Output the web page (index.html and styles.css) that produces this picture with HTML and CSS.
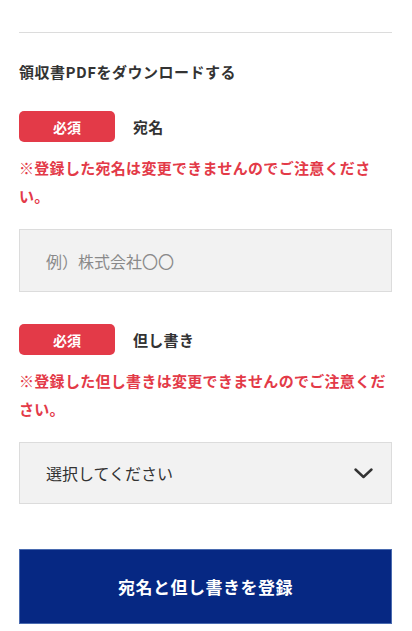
FILE: index.html
```html
<!DOCTYPE html>
<html lang="ja">
<head>
<meta charset="utf-8">
<link rel="stylesheet" href="styles.css">
</head>
<body>
<div class="page">
  <hr class="divider">
  <h2 class="title">領収書PDFをダウンロードする</h2>

  <div class="field">
    <div class="label-row">
      <span class="badge">必須</span>
      <span class="label">宛名</span>
    </div>
    <p class="note">※登録した宛名は変更できませんのでご注意ください。</p>
    <div class="input">例）株式会社〇〇</div>
  </div>

  <div class="field field-2">
    <div class="label-row">
      <span class="badge">必須</span>
      <span class="label">但し書き</span>
    </div>
    <p class="note">※登録した但し書きは変更できませんのでご注意ください。</p>
    <div class="select">
      <span class="select-text">選択してください</span>
      <svg class="chevron" width="19" height="11" viewBox="0 0 19 11"><path d="M1.5 1.5 L9.5 9 L17.5 1.5" fill="none" stroke="#333" stroke-width="2.4" stroke-linecap="round" stroke-linejoin="round"/></svg>
    </div>
  </div>

  <button class="submit">宛名と但し書きを登録</button>
</div>
</body>
</html>
```
FILE: styles.css
```css
* { box-sizing: border-box; }
html, body { margin: 0; padding: 0; background: #fff; }
body {
  font-family: "Noto Sans CJK JP", "Noto Sans", sans-serif;
  color: #333;
}
.page {
  padding: 32px 20px 0 19px;
  display: flex;
  flex-direction: column;
}
.divider {
  margin: 0;
  border: 0;
  border-top: 1px solid #dcdcdc;
}
.title {
  margin: 27px 0 0;
  font-size: 15px;
  line-height: 24px;
  font-weight: 700;
  color: #333;
  letter-spacing: 0.5px;
}
.field { margin-top: 27px; }
.field-2 { margin-top: 32px; }
.label-row {
  display: flex;
  align-items: center;
  gap: 18px;
}
.badge {
  width: 96px;
  height: 31px;
  border-radius: 5px;
  background: #e33a48;
  color: #fff;
  font-size: 14px;
  font-weight: 700;
  display: flex;
  align-items: center;
  justify-content: center;
}
.label {
  font-size: 15px;
  font-weight: 700;
  color: #333;
  letter-spacing: 0.3px;
}
.note {
  margin: 12px 0 0;
  font-size: 15px;
  line-height: 28px;
  font-weight: 700;
  color: #e33a48;
  letter-spacing: 0.3px;
}
.input, .select {
  margin-top: 19px;
  height: 63px;
  background: #f2f2f2;
  border: 1px solid #dcdcdc;
  display: flex;
  align-items: center;
  padding: 0 18px 0 26px;
  font-size: 16px;
}
.input { color: #8a8a8a; }
.select {
  height: 62px;
  justify-content: space-between;
  color: #333;
}
.chevron { display: block; }
.submit {
  margin-top: 45px;
  height: 75px;
  width: 100%;
  border: 1px solid #4a6bb0;
  background: #062883;
  color: #fff;
  font-family: inherit;
  font-size: 17px;
  font-weight: 700;
  letter-spacing: 0.5px;
}
```
